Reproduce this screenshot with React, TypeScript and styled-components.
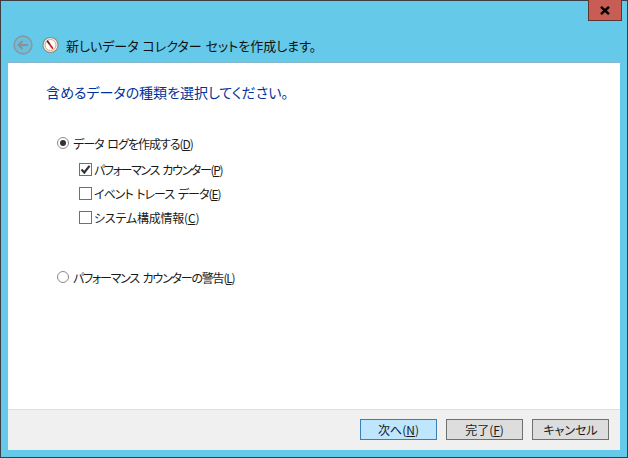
import React from 'react';
import styled, { createGlobalStyle } from 'styled-components';

const GlobalStyle = createGlobalStyle`
	html, body {
		margin: 0;
		padding: 0;
		background: #65c9ea;
	}
`;

const Window = styled.div`
	box-sizing: border-box;
	width: 628px;
	height: 458px;
	display: flex;
	flex-direction: column;
	background: #65c9ea;
	border: 1px solid #3a3f44;
	font-family: 'Noto Sans CJK JP', sans-serif;
	font-feature-settings: 'palt' 1;
	font-size: 12px;
	color: #1a1a1a;
`;

const TitleBar = styled.div`
	display: flex;
	justify-content: flex-end;
	height: 20px;
	padding-right: 5px;
`;

const CloseButton = styled.button`
	box-sizing: border-box;
	width: 34px;
	height: 21px;
	margin-top: -1px;
	padding: 0;
	display: flex;
	align-items: center;
	justify-content: center;
	background: #c75d55;
	border: 1px solid #5e3530;
	border-top: 0;
`;

const NavBar = styled.div`
	display: flex;
	align-items: center;
	height: 41px;
	padding: 7px 0 0 12px;
	box-sizing: border-box;
`;

const GaugeSvg = styled.svg`
	margin: 0 7px 0 9px;
`;

const NavTitle = styled.span`
	font-size: 13px;
	word-spacing: 1px;
	color: #111;
	white-space: pre;
`;

const Panel = styled.div`
	flex: 1;
	display: flex;
	flex-direction: column;
	margin: 0 7px 7px;
	background: #fff;
	border-top: 1px solid #8ab6cc;
`;

const Body = styled.div`
	flex: 1;
	padding: 18px 0 0 38px;
`;

const Heading = styled.h1`
	margin: 0 0 28px;
	font-size: 14px;
	font-weight: 400;
	line-height: 22px;
	color: #003399;
`;

const OptionRow = styled.label<{ $gap?: number; $indent?: number; $spacing?: number }>`
	display: flex;
	align-items: center;
	height: 24px;
	margin-top: ${({ $gap }) => $gap ?? 0}px;
	padding-left: ${({ $indent }) => $indent ?? 11}px;
	white-space: pre;
	letter-spacing: ${({ $spacing }) => $spacing ?? 0}px;
	word-spacing: 2px;
`;

const RadioMark = styled.span<{ $checked?: boolean }>`
	box-sizing: border-box;
	position: relative;
	width: 12px;
	height: 12px;
	margin-right: 4px;
	flex: none;
	border: 1px solid #8a8a8a;
	border-radius: 50%;
	background: #fff;

	&::after {
		content: '';
		display: ${({ $checked }) => ($checked ? 'block' : 'none')};
		position: absolute;
		top: 2px;
		left: 2px;
		width: 6px;
		height: 6px;
		border-radius: 50%;
		background: #333;
	}
`;

const CheckMark = styled.span`
	box-sizing: border-box;
	display: flex;
	align-items: center;
	justify-content: center;
	width: 13px;
	height: 13px;
	margin-right: 2px;
	flex: none;
	border: 1px solid #707070;
	background: #fff;
`;

const Key = styled.span`
	text-decoration: underline;
	text-underline-offset: 1px;
`;

const Footer = styled.div`
	box-sizing: border-box;
	height: 41px;
	display: flex;
	justify-content: flex-end;
	gap: 9px;
	padding: 9px 11px 0 0;
	background: #f0f0f0;
	border-top: 1px solid #dfdfdf;
`;

const DialogButton = styled.button<{ $primary?: boolean }>`
	box-sizing: border-box;
	width: 77px;
	height: 21px;
	padding: 0;
	font: inherit;
	font-feature-settings: 'palt' 1;
	line-height: 18px;
	color: #1a1a1a;
	background: ${({ $primary }) => ($primary ? '#bee6fd' : '#dddddd')};
	border: 1px solid ${({ $primary }) => ($primary ? '#3c7fb1' : '#707070')};
`;

const BackIcon = () => (
	<svg width='20' height='20' viewBox='0 0 20 20'>
		<circle cx='10' cy='10' r='8.9' fill='#6cbfdc' stroke='#8a979e' strokeWidth='1.6' />
		<path d='M15 10H6M9.5 6L5.5 10L9.5 14' fill='none' stroke='#86929a' strokeWidth='2' />
	</svg>
);

const GaugeIcon = () => (
	<GaugeSvg width='17' height='18' viewBox='0 0 18 18'>
		<circle cx='9' cy='9' r='8' fill='#f3efe6' stroke='#8a8a80' strokeWidth='1.2' />
		<circle cx='9' cy='9' r='5.8' fill='#fff' stroke='#d8a27a' strokeWidth='1' />
		<path d='M5.5 4.5L11.5 13' stroke='#c8202a' strokeWidth='1.8' />
		<path d='M5.5 4.5L8 8' stroke='#5a2a2a' strokeWidth='1.4' />
	</GaugeSvg>
);

const App = () => (
	<>
		<GlobalStyle />
		<Window>
			<TitleBar>
				<CloseButton type='button' aria-label='閉じる'>
					<svg width='10' height='9' viewBox='0 0 10 9'>
						<path d='M1 0.8L9 8.2M9 0.8L1 8.2' stroke='#000' strokeWidth='2.4' />
					</svg>
				</CloseButton>
			</TitleBar>
			<NavBar>
				<BackIcon />
				<GaugeIcon />
				<NavTitle>新しいデータ コレクター セットを作成します。</NavTitle>
			</NavBar>
			<Panel>
				<Body>
					<Heading>含めるデータの種類を選択してください。</Heading>
					<OptionRow $spacing={-1}>
						<RadioMark $checked />
						データ ログを作成する(<Key>D</Key>)
					</OptionRow>
					<OptionRow $gap={2} $indent={33} $spacing={-1.35}>
						<CheckMark>
							<svg width='11' height='11' viewBox='0 0 11 11'>
								<path d='M1.5 5.5L4.3 8.5L9.5 1.8' fill='none' stroke='#333' strokeWidth='2.2' />
							</svg>
						</CheckMark>
						パフォーマンス カウンター(<Key>P</Key>)
					</OptionRow>
					<OptionRow $indent={33} $spacing={-1}>
						<CheckMark />
						イベント トレース データ(<Key>E</Key>)
					</OptionRow>
					<OptionRow $indent={33} $spacing={-0.2}>
						<CheckMark />
						システム構成情報(<Key>C</Key>)
					</OptionRow>
					<OptionRow $gap={36} $spacing={-1.2}>
						<RadioMark />
						パフォーマンス カウンターの警告(<Key>L</Key>)
					</OptionRow>
				</Body>
				<Footer>
					<DialogButton type='button' $primary>
						次へ(<Key>N</Key>)
					</DialogButton>
					<DialogButton type='button'>
						完了(<Key>F</Key>)
					</DialogButton>
					<DialogButton type='button'>キャンセル</DialogButton>
				</Footer>
			</Panel>
		</Window>
	</>
);

export default App;
